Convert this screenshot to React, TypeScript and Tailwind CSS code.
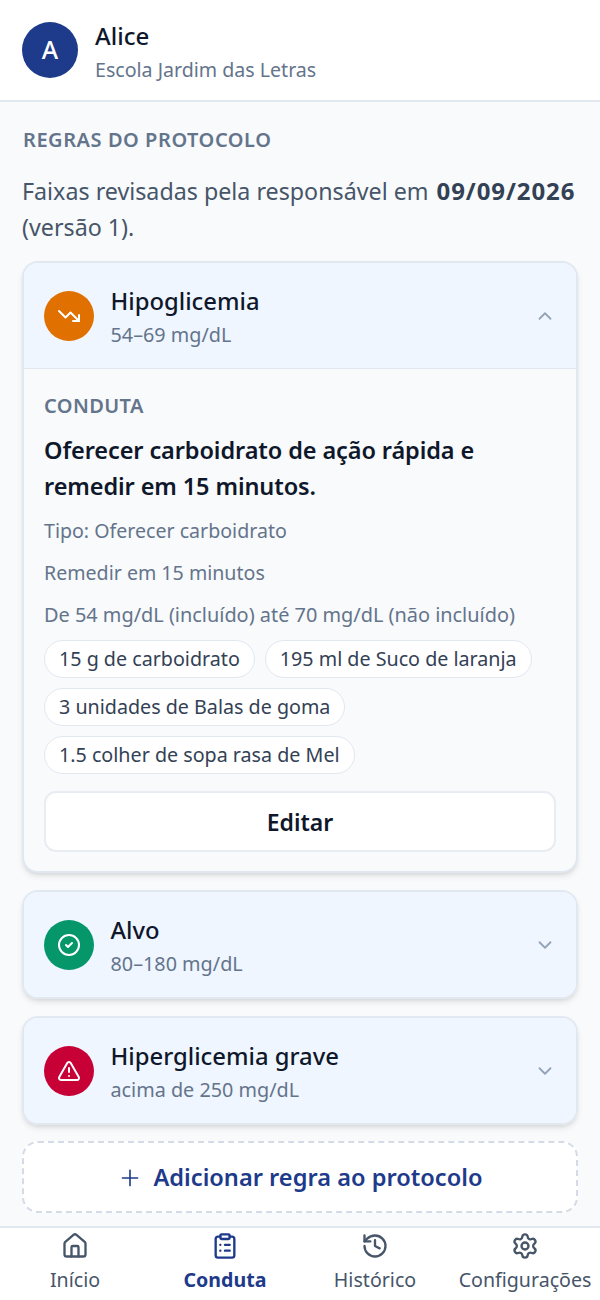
import { ChevronDown, ChevronUp, CircleCheck, ClipboardList, History, House, Plus, Settings, TrendingDown, TriangleAlert } from 'lucide-react';
import type { ReactNode } from 'react';

function RuleHeader({ icon, color, title, range, open }: { icon: ReactNode; color: string; title: string; range: string; open?: boolean }) {
  return (
    <div className={`flex items-center gap-[17px] bg-[#eff6ff] pl-[19.5px] pr-[20px] ${open ? 'h-[106px] border-b border-[#e2e8f0]' : 'h-[105px]'}`}>
      <div className={`flex h-[50px] w-[50px] shrink-0 items-center justify-center rounded-full text-white ${color}`}>{icon}</div>
      <div className="min-w-0 flex-1 pt-[2px]">
        <div className="text-[23.8px] leading-[32px] font-medium text-[#0f172a]">{title}</div>
        <div className="mt-[4px] text-[19.8px] leading-[28px] text-[#64748b]">{range}</div>
      </div>
      {open ? <ChevronUp className="h-[22px] w-[22px] text-[#94a3b8]" /> : <ChevronDown className="h-[22px] w-[22px] text-[#94a3b8]" />}
    </div>
  );
}

function Chip({ children }: { children: ReactNode }) {
  return <span className="flex h-[38px] items-center rounded-full border border-[#e2e8f0] bg-white px-[14px] text-[19.7px] text-[#334155]">{children}</span>;
}

function NavItem({ icon, label, active }: { icon: ReactNode; label: string; active?: boolean }) {
  return (
    <div className={`flex flex-1 flex-col items-center ${active ? 'font-bold text-[#1e3a8a]' : 'text-[#475569]'}`}>
      {icon}
      <span className="mt-[6px] text-[19.6px] leading-[28px] whitespace-nowrap">{label}</span>
    </div>
  );
}

export default function App() {
  return (
    <div className="flex h-[1300px] w-[600px] flex-col overflow-hidden bg-[#f8fafc] font-['Noto_Sans',sans-serif]">
      <header className="flex h-[102px] shrink-0 items-center gap-[17px] border-b-2 border-[#e2e8f0] bg-white px-[22px]">
        <div className="flex h-14 w-14 items-center justify-center rounded-full bg-[#1e3a8a] text-[25px] font-medium text-white">A</div>
        <div className="pt-[3px]">
          <div className="text-[24px] leading-[32px] font-medium text-[#0f172a]">Alice</div>
          <div className="mt-[4px] text-[19.6px] leading-[28px] text-[#64748b]">Escola Jardim das Letras</div>
        </div>
      </header>

      <main className="flex-1 px-[22px] pt-[24px]">
        <h2 className="pl-[1px] text-[20px] leading-[28px] font-semibold tracking-[0.55px] text-[#64748b]">REGRAS DO PROTOCOLO</h2>
        <p className="mt-[19px] text-[23.25px] leading-[36px] text-[#475569]">
          Faixas revisadas pela responsável em <strong className="ml-[2px] text-[24px] font-bold tracking-[0.9px] text-[#334155]">09/09/2026</strong> (versão 1).
        </p>

        <section className="mt-[16px] overflow-hidden rounded-2xl border-2 border-[#e2e8f0] bg-[#f8fafc] shadow-md">
          <RuleHeader icon={<TrendingDown className="h-6 w-6" />} color="bg-[#e07000]" title="Hipoglicemia" range="54–69 mg/dL" open />
          <div className="px-5 pt-[23px] pb-[19.5px]">
            <div className="text-[20px] leading-[28px] font-semibold tracking-[0.4px] text-[#64748b]">CONDUTA</div>
            <div className="mt-[11.5px] text-[23.5px] leading-[36px] font-semibold tracking-[-0.1px] text-[#0f172a]">Oferecer carboidrato de ação rápida e remedir em 15 minutos.</div>
            <div className="mt-[13px] text-[19.6px] leading-[28px] text-[#64748b]">Tipo: Oferecer carboidrato</div>
            <div className="mt-[14px] text-[19.6px] leading-[28px] text-[#64748b]">Remedir em 15 minutos</div>
            <div className="mt-[14px] text-[19.9px] leading-[28px] text-[#64748b]">De 54 mg/dL (incluído) até 70 mg/dL (não incluído)</div>
            <div className="mt-[11px] flex flex-wrap gap-[10px]">
              <Chip>15 g de carboidrato</Chip>
              <Chip>195 ml de Suco de laranja</Chip>
              <Chip>3 unidades de Balas de goma</Chip>
              <Chip>1.5 colher de sopa rasa de Mel</Chip>
            </div>
            <button className="mt-[17px] h-[61px] w-full rounded-xl border-2 border-[#e8edf3] bg-white pt-[2px] text-[23px] font-semibold text-[#0f172a]">Editar</button>
          </div>
        </section>

        <section className="mt-[17px] overflow-hidden rounded-2xl border-2 border-[#e2e8f0] shadow-md">
          <RuleHeader icon={<CircleCheck className="h-6 w-6" />} color="bg-[#059669]" title="Alvo" range="80–180 mg/dL" />
        </section>
        <section className="mt-[17px] overflow-hidden rounded-2xl border-2 border-[#e2e8f0] shadow-md">
          <RuleHeader icon={<TriangleAlert className="h-6 w-6" />} color="bg-[#c70036]" title="Hiperglicemia grave" range="acima de 250 mg/dL" />
        </section>

        <button className="mt-[16px] flex h-[72px] w-full items-center justify-center gap-[10px] rounded-2xl border-2 border-dashed border-[#d3dbe6] bg-white pt-[1px] text-[23.6px] font-semibold text-[#1e3a8a]">
          <Plus className="h-[26px] w-[26px] stroke-[1.5]" />
          Adicionar regra ao protocolo
        </button>
      </main>

      <nav className="flex h-[74px] shrink-0 border-t-2 border-[#e2e8f0] bg-white pt-[4px]">
        <NavItem icon={<House className="h-7 w-7" />} label="Início" />
        <NavItem icon={<ClipboardList className="h-7 w-7" />} label="Conduta" active />
        <NavItem icon={<History className="h-7 w-7" />} label="Histórico" />
        <NavItem icon={<Settings className="h-7 w-7" />} label="Configurações" />
      </nav>
    </div>
  );
}
